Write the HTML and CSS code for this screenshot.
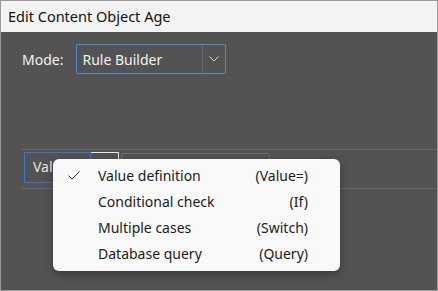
FILE: index.html
```html
<!DOCTYPE html>
<html lang="en">
<head>
    <meta charset="UTF-8">
    <meta name="viewport" content="width=device-width, initial-scale=1.0">
    <title>Edit Content Object Age</title>
    <link rel="stylesheet" href="styles.css">
</head>
<body>
    <div class="window">
        <div class="title-bar">Edit Content Object Age</div>

        <div class="content">
            <div class="mode-row">
                <label class="mode-label">Mode:</label>
                <div class="select">
                    <span class="select-value">Rule Builder</span>
                    <span class="select-arrow">
                        <svg width="10" height="6" viewBox="0 0 10 6"><path d="M0.5 0.5 L5 5 L9.5 0.5" fill="none" stroke="#d8d8d8" stroke-width="1"/></svg>
                    </span>
                </div>
            </div>

            <div class="rule-panel">
                <div class="rule-row">
                    <div class="rule-kind">Val</div>
                    <div class="rule-op"></div>
                    <div class="rule-value"></div>
                </div>
            </div>

            <!-- dropdown opened from the rule kind box -->
            <div class="menu">
                <div class="menu-item">
                    <span class="menu-check">
                        <svg width="12" height="9" viewBox="0 0 12 9"><path d="M0.5 4.5 L4 8 L11.5 0.5" fill="none" stroke="#333" stroke-width="1"/></svg>
                    </span>
                    <span class="menu-label">Value definition</span>
                    <span class="menu-key">(Value=)</span>
                </div>
                <div class="menu-item">
                    <span class="menu-check"></span>
                    <span class="menu-label">Conditional check</span>
                    <span class="menu-key">(If)</span>
                </div>
                <div class="menu-item">
                    <span class="menu-check"></span>
                    <span class="menu-label">Multiple cases</span>
                    <span class="menu-key">(Switch)</span>
                </div>
                <div class="menu-item">
                    <span class="menu-check"></span>
                    <span class="menu-label">Database query</span>
                    <span class="menu-key">(Query)</span>
                </div>
            </div>
        </div>
    </div>
</body>
</html>
```

FILE: styles.css
```css
:root {
    --border: #9b9b9b;
    --title-bg: #f3f3f3;
    --panel: #535353;
    --line: #686868;
    --accent: #4a8fd6;
    --text-light: #f2f2f2;
    --text-dark: #1b1b1b;
    --menu-bg: #f9f9f9;
}

* {
    margin: 0;
    padding: 0;
    box-sizing: border-box;
    font-family: 'Noto Sans', 'Open Sans', sans-serif;
}

body {
    width: 438px;
    height: 291px;
    overflow: hidden;
}

.window {
    width: 438px;
    height: 291px;
    border: 1px solid var(--border);
    display: flex;
    flex-direction: column;
}

.title-bar {
    height: 31px;
    background-color: var(--title-bg);
    color: #111;
    font-size: 14.5px;
    padding-left: 7px;
    line-height: 30px;
}

.content {
    flex: 1;
    background-color: var(--panel);
    position: relative;
}

.mode-row {
    display: flex;
    align-items: center;
    padding: 12px 0 0 21px;
    gap: 13px;
}

.mode-label {
    color: var(--text-light);
    font-size: 14px;
}

.select {
    width: 150px;
    height: 30px;
    border: 1px solid var(--accent);
    border-radius: 2px;
    display: flex;
    align-items: center;
}

.select-value {
    flex: 1;
    color: var(--text-light);
    font-size: 14px;
    padding-left: 5px;
}

.select-arrow {
    width: 23px;
    height: 100%;
    border-left: 1px solid #666;
    display: flex;
    align-items: center;
    justify-content: center;
}

.rule-panel {
    margin: 75px 0 0 21px;
    height: 40px;
    border-top: 1px solid var(--line);
    border-bottom: 1px solid var(--line);
}

.rule-row {
    display: flex;
    align-items: flex-start;
    padding: 2px 0 0 2px;
}

.rule-kind {
    width: 67px;
    height: 31px;
    border: 1px solid #3d74d0;
    color: #e8e8e8;
    font-size: 14px;
    padding-left: 8px;
    line-height: 28px;
}

.rule-op {
    width: 28px;
    height: 30px;
    border-top: 1px solid #e6e6e6;
    border-right: 1px solid #e6e6e6;
}

.rule-value {
    width: 149px;
    height: 30px;
    margin-left: 2px;
    margin-top: 1px;
    border: 1px solid #6f6f6f;
    border-radius: 3px;
}

.menu {
    position: absolute;
    left: 52px;
    top: 127px;
    width: 287px;
    padding: 3px 0 5px;
    background-color: var(--menu-bg);
    border-radius: 6px;
    box-shadow: 0 3px 10px rgba(0, 0, 0, 0.35);
}

.menu-item {
    display: flex;
    align-items: center;
    height: 26px;
    color: var(--text-dark);
    font-size: 14px;
}

.menu-check {
    width: 45px;
    padding-left: 15px;
    display: flex;
    align-items: center;
}

.menu-label {
    flex: 1;
}

.menu-key {
    padding-right: 32px;
}
```
